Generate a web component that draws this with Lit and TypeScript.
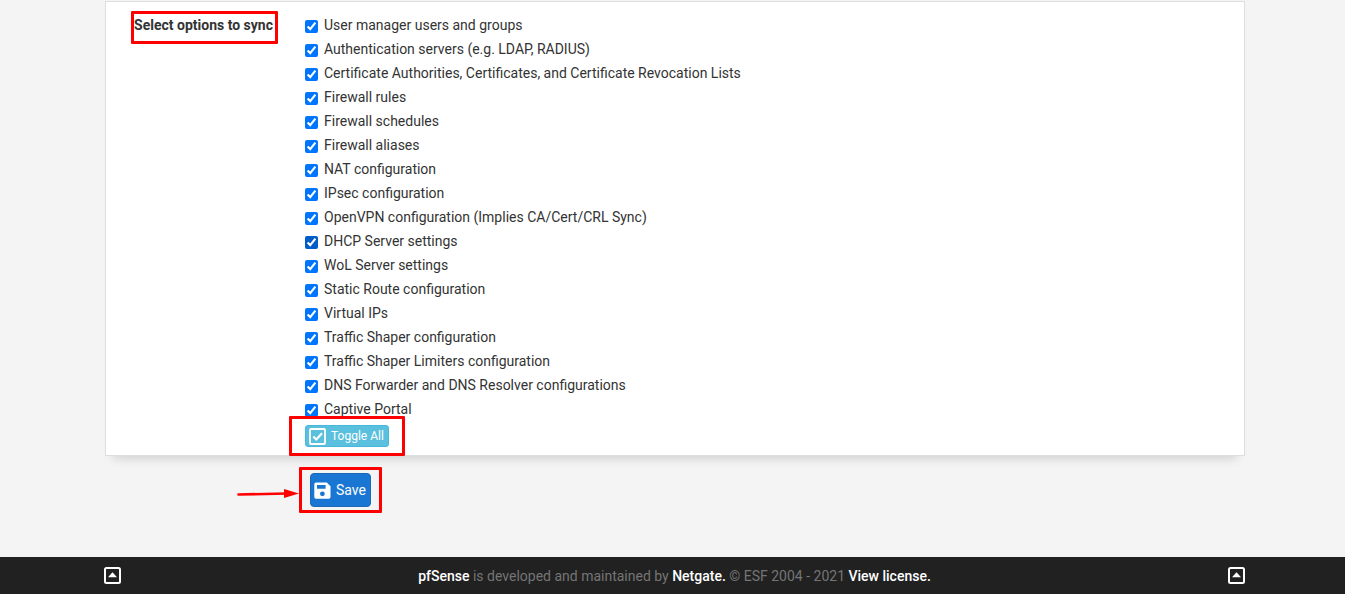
import { LitElement, html, css } from "lit";
import { customElement, state } from "lit/decorators.js";

interface SyncOption {
  id: string;
  label: string;
  checked: boolean;
  active?: boolean;
}

const option = (id: string, label: string, active = false): SyncOption => ({ id, label, checked: true, active });

@customElement("app-root")
export class AppRoot extends LitElement {
  static styles = css`
    :host {
      display: flex;
      flex-direction: column;
      min-height: 100vh;
      background: #f4f4f4;
      color: #333;
      font: 14px/20px Roboto, "Liberation Sans", sans-serif;
    }
    .content {
      flex: 1;
      padding: 1px 100px 44px 105px;
    }
    .panel {
      display: grid;
      grid-template-columns: 167px 1fr;
      column-gap: 32px;
      padding: 11px 0 8px;
      background: #fff;
      border: 1px solid #dcdfdf;
      box-shadow: 0 10px 10px -8px rgba(0, 0, 0, 0.16);
    }
    .heading {
      justify-self: end;
      align-self: start;
      position: relative;
      padding-top: 2px;
      font-weight: 700;
      white-space: nowrap;
    }
    .options {
      display: flex;
      flex-direction: column;
      align-items: flex-start;
    }
    .option {
      display: flex;
      align-items: center;
      gap: 6px;
      height: 24px;
    }
    .option input {
      width: 13px;
      height: 13px;
      margin: 2px 0 0;
      accent-color: #0075ff;
    }
    .option.active input {
      accent-color: #005cc8;
    }
    button {
      display: flex;
      align-items: center;
      position: relative;
      font-family: inherit;
      color: #fff;
      cursor: pointer;
    }
    .toggle {
      height: 22px;
      margin-top: 4px;
      padding: 0 4px 0 3px;
      font-size: 12px;
      background: #5bc0de;
      border: 1px solid #46b8da;
      border-radius: 3px;
    }
    .save {
      height: 34px;
      margin: 17px 0 0 205px;
      padding: 0 4px 0 3px;
      font-size: 14px;
      background: #1976d2;
      border: 1px solid #1c69b5;
      border-radius: 4px;
    }
    svg {
      display: block;
      flex: none;
    }
    .icon {
      margin-right: 5px;
    }
    .mark {
      position: absolute;
      box-sizing: border-box;
      border: 3px solid #f00;
      border-radius: 1px;
      pointer-events: none;
    }
    .heading .mark {
      inset: -2px -5px -9px -3px;
    }
    .toggle .mark {
      inset: -10px -17px;
    }
    .save .mark {
      inset: -7px -12px;
    }
    .arrow {
      position: absolute;
      right: 100%;
      top: 13px;
      margin-right: 12px;
      pointer-events: none;
    }
    footer {
      display: flex;
      align-items: center;
      justify-content: space-between;
      height: 37px;
      padding: 0 100px 0 104px;
      background: #212121;
      color: #757575;
    }
    footer p {
      margin: 0;
    }
    a {
      color: #fff;
      font-weight: 500;
      text-decoration: none;
    }
  `;

  @state() private options: SyncOption[] = [
    option("users", "User manager users and groups"),
    option("auth", "Authentication servers (e.g. LDAP, RADIUS)"),
    option("certs", "Certificate Authorities, Certificates, and Certificate Revocation Lists"),
    option("rules", "Firewall rules"),
    option("schedules", "Firewall schedules"),
    option("aliases", "Firewall aliases"),
    option("nat", "NAT configuration"),
    option("ipsec", "IPsec configuration"),
    option("openvpn", "OpenVPN configuration (Implies CA/Cert/CRL Sync)"),
    option("dhcp", "DHCP Server settings", true),
    option("wol", "WoL Server settings"),
    option("routes", "Static Route configuration"),
    option("vips", "Virtual IPs"),
    option("shaper", "Traffic Shaper configuration"),
    option("limiters", "Traffic Shaper Limiters configuration"),
    option("dns", "DNS Forwarder and DNS Resolver configurations"),
    option("portal", "Captive Portal"),
  ];

  private toggleAll() {
    const checked = !this.options.every((o) => o.checked);
    this.options = this.options.map((o) => ({ ...o, checked }));
  }

  private setOption(id: string, checked: boolean) {
    this.options = this.options.map((o) => (o.id === id ? { ...o, checked } : o));
  }

  private topLink() {
    return html`<a href="#" aria-label="Top of page">
      <svg width="17" height="17" viewBox="0 0 17 17">
        <rect x="1" y="1" width="15" height="15" rx="1.5" fill="none" stroke="#fff" stroke-width="2" />
        <path d="M4 10.2 8.5 5.2 13 10.2Z" fill="#fff" />
      </svg>
    </a>`;
  }

  render() {
    return html`
      <main class="content">
        <section class="panel">
          <div class="heading" id="sync-heading">Select options to sync<span class="mark"></span></div>
          <div class="options" role="group" aria-labelledby="sync-heading">
            ${this.options.map(
              (o) => html`<label class="option ${o.active ? "active" : ""}">
                <input
                  type="checkbox"
                  name=${o.id}
                  .checked=${o.checked}
                  @change=${(e: Event) => this.setOption(o.id, (e.target as HTMLInputElement).checked)}
                />
                <span>${o.label}</span>
              </label>`
            )}
            <button class="toggle" type="button" @click=${this.toggleAll}>
              <svg class="icon" width="17" height="17" viewBox="0 0 17 17" fill="none" stroke="#fff">
                <rect x="1" y="1" width="15" height="15" rx="1" stroke-width="1.8" />
                <path d="M4.3 8.5 7.3 11.5 13 5.3" stroke-width="2.1" />
              </svg>
              <span>Toggle All</span>
              <span class="mark"></span>
            </button>
          </div>
        </section>
        <button class="save" type="submit">
          <svg class="icon" width="17" height="17" viewBox="0 0 17 17">
            <path
              fill="#fff"
              fill-rule="evenodd"
              d="M2 0.5H12.8L16.5 4.2V15A1.7 1.7 0 0 1 14.8 16.7H2A1.7 1.7 0 0 1 .3 15V2.2A1.7 1.7 0 0 1 2 .5ZM3 3V6.8H11.6V3ZM8.4 9.4A2.4 2.4 0 1 0 8.4 14.2 2.4 2.4 0 1 0 8.4 9.4Z"
            />
          </svg>
          <span>Save</span>
          <span class="mark"></span>
          <svg class="arrow" width="62" height="12" viewBox="0 0 62 12">
            <path d="M1.5 7.5 50 6.5" stroke="#f00" stroke-width="2.6" stroke-linecap="round" />
            <path d="M47 2 62 6.5 47 11Z" fill="#f00" />
          </svg>
        </button>
      </main>
      <footer>
        ${this.topLink()}
        <p>
          <a href="#">pfSense</a> is developed and maintained by <a href="#">Netgate.</a> © ESF 2004 - 2021
          <a href="#">View license.</a>
        </p>
        ${this.topLink()}
      </footer>
    `;
  }
}
